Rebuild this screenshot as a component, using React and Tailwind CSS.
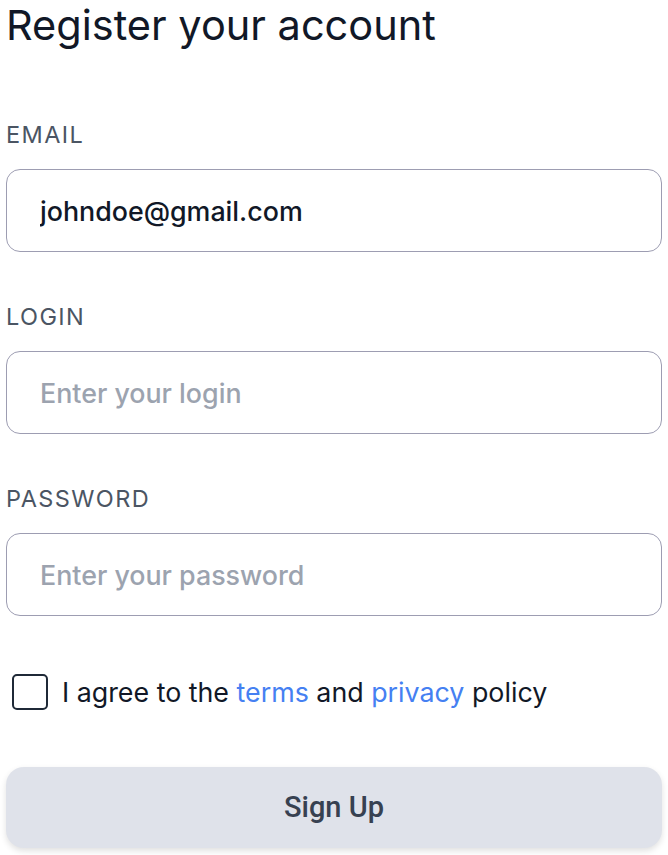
import { useState } from 'react';

function Field({ label, placeholder, defaultValue, type = 'text' }) {
  return (
    <div className="flex flex-col">
      <label className="text-[23.5px] leading-[30px] tracking-[0.06em] uppercase text-[#4b5563] mb-[19px]">
        {label}
      </label>
      <input
        type={type}
        defaultValue={defaultValue}
        placeholder={placeholder}
        className="h-[83px] w-full rounded-[14px] border-[1.5px] border-[#9d9db2] bg-white px-[33px] text-[26.8px] font-medium text-[#111827] placeholder:text-[#9ca3af] outline-none"
      />
    </div>
  );
}

export default function App() {
  const [agree, setAgree] = useState(false);

  return (
    <div className="min-h-screen bg-white px-[6px] font-['Inter',sans-serif]">
      <h1 className="text-[41.5px] leading-[50px] font-normal text-[#111827]">
        Register your account
      </h1>

      <div className="mt-[70px] flex flex-col gap-[50px]">
        <Field label="Email" type="email" defaultValue="johndoe@gmail.com" />
        <Field label="Login" placeholder="Enter your login" />
        <Field label="Password" type="password" placeholder="Enter your password" />
      </div>

      <label className="mt-[58px] flex h-[36px] items-center gap-[14px] pl-[6px] text-[26.8px] text-[#111827]">
        <input
          type="checkbox"
          checked={agree}
          onChange={(e) => setAgree(e.target.checked)}
          className="h-[36px] w-[36px] shrink-0 appearance-none rounded-[5px] border-2 border-[#1f2937] bg-white"
        />
        <span>
          I agree to the <a href="#" className="text-[#4580f2]">terms</a> and{' '}
          <a href="#" className="text-[#4580f2]">privacy</a> policy
        </span>
      </label>

      <button
        type="button"
        className="mt-[57px] h-[81px] w-full rounded-[18px] bg-[#dfe2ea] text-[29px] font-medium text-[#374151] shadow-[0_3px_6px_rgba(0,0,0,0.12)] font-['Roboto',sans-serif]"
      >
        Sign Up
      </button>
    </div>
  );
}
